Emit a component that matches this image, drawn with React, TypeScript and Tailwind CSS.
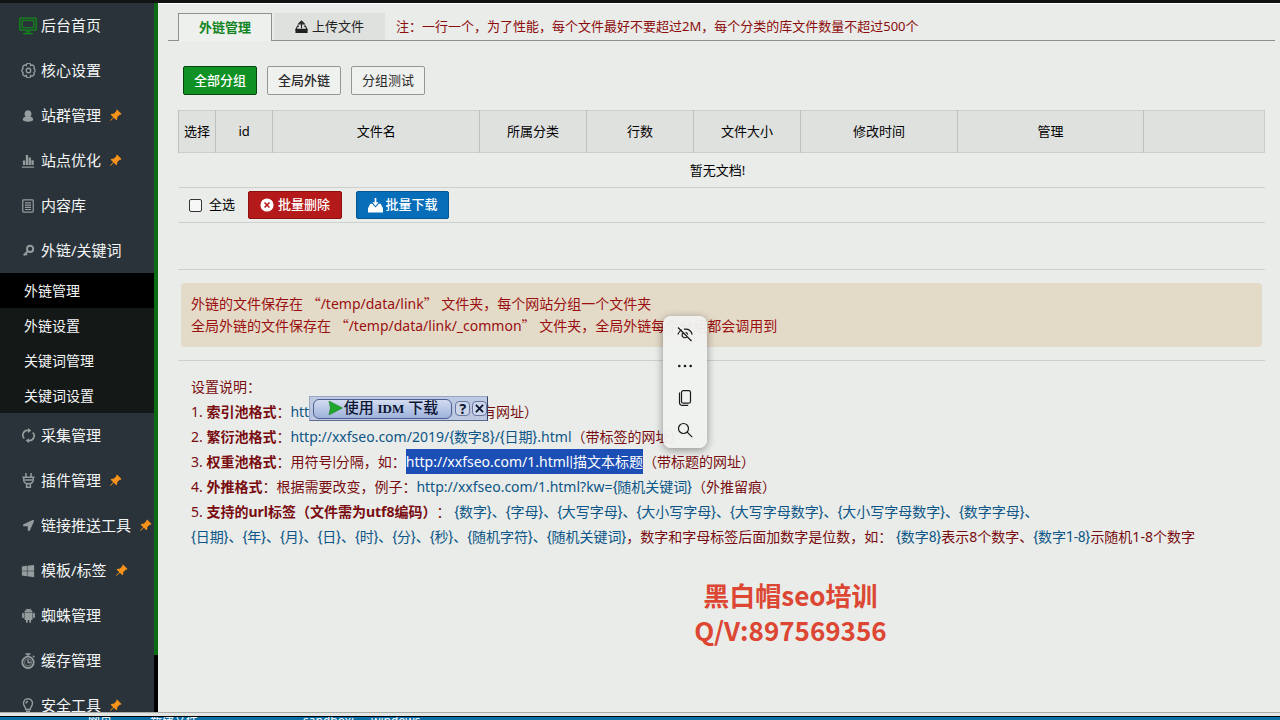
import { useState } from "react";
import type { ReactNode } from "react";
import { AiFillAndroid } from "react-icons/ai";
import { BsPinAngleFill } from "react-icons/bs";
import { FaLocationArrow, FaWindows } from "react-icons/fa";

type MenuItem = {
  label: string;
  icon: ReactNode;
  pinned?: boolean;
  children?: string[];
};

function Glyph({ children, size = 14 }: { children: ReactNode; size?: number }) {
  return (
    <svg
      width={size}
      height={size}
      viewBox="0 0 16 16"
      fill="none"
      stroke="currentColor"
      strokeWidth="1.4"
      aria-hidden="true"
    >
      {children}
    </svg>
  );
}

const MENU: MenuItem[] = [
  {
    label: "后台首页",
    icon: (
      <span className="text-[#118a1b]">
        <Glyph size={18}>
          <rect x="0.7" y="1" width="14.6" height="10.6" rx="0.6" strokeWidth="1.2" />
          <rect x="2.8" y="3" width="10.4" height="6.6" strokeWidth="1" />
          <path d="M6 13.2h4M3.6 14.8h8.8" strokeWidth="1.2" />
        </Glyph>
      </span>
    ),
  },
  {
    label: "核心设置",
    icon: (
      <Glyph size={15}>
        <path d="M5.6 2.6a2.4 2.4 0 0 1 4.8 0 2.4 2.4 0 0 1 3.4 3.2 2.6 2.6 0 0 1 0 4.4 2.4 2.4 0 0 1-3.4 3.2 2.4 2.4 0 0 1-4.8 0 2.4 2.4 0 0 1-3.4-3.2 2.6 2.6 0 0 1 0-4.4A2.4 2.4 0 0 1 5.6 2.6z" />
        <circle cx="8" cy="8" r="2.4" />
      </Glyph>
    ),
  },
  {
    label: "站群管理",
    icon: (
      <Glyph>
        <path
          d="M8 1.5a4 4 0 0 1 2.6 7c2 .6 3.4 1.8 3.4 3.6 0 1.6-2.6 2.4-6 2.4s-6-.8-6-2.4c0-1.8 1.4-3 3.4-3.6A4 4 0 0 1 8 1.5z"
          fill="currentColor"
          stroke="none"
        />
      </Glyph>
    ),
    pinned: true,
  },
  {
    label: "站点优化",
    icon: (
      <Glyph>
        <path d="M1 15h14" />
        <path d="M3.5 12.5v-5M6.8 12.5V1M10 12.5V4M13.2 12.5V7" strokeWidth="2.6" />
      </Glyph>
    ),
    pinned: true,
  },
  {
    label: "内容库",
    icon: (
      <Glyph>
        <rect x="2" y="1" width="12" height="14" rx="1" />
        <path d="M4.5 4.5h7M4.5 7h7M4.5 9.5h7M4.5 12h7" strokeWidth="1.3" />
      </Glyph>
    ),
  },
  {
    label: "外链/关键词",
    icon: (
      <Glyph size={13}>
        <circle cx="10" cy="6" r="3.8" strokeWidth="2.4" />
        <path d="M7.3 8.7 2 14M3.8 11.5l2.2 2.2" strokeWidth="2.4" />
      </Glyph>
    ),
    children: ["外链管理", "外链设置", "关键词管理", "关键词设置"],
  },
  {
    label: "采集管理",
    icon: (
      <Glyph size={15}>
        <path d="M9 2.6H7a5 5 0 0 0-3.5 8.6M7 13.4h2a5 5 0 0 0 3.5-8.6" strokeWidth="1.8" />
        <path d="M7.5 0v5.2L11 2.6zM8.5 10.8V16L5 13.4z" fill="currentColor" stroke="none" />
      </Glyph>
    ),
  },
  {
    label: "插件管理",
    icon: (
      <Glyph size={15}>
        <path
          d="M5.3 0v4M10.7 0v4M1.5 4.5h13M3 4.5V8a5 3.5 0 0 0 10 0V4.5M4 7.5h8M6 11.5v3.8h4v-3.8"
          strokeWidth="1.6"
        />
      </Glyph>
    ),
    pinned: true,
  },
  { label: "链接推送工具", icon: <FaLocationArrow size={11} />, pinned: true },
  { label: "模板/标签", icon: <FaWindows size={14} />, pinned: true },
  { label: "蜘蛛管理", icon: <AiFillAndroid size={17} /> },
  {
    label: "缓存管理",
    icon: (
      <Glyph size={16}>
        <circle cx="8" cy="9.3" r="5.7" strokeWidth="1.8" />
        <path d="M8 6.5v3h2.8M8 3.5V1M5.5 1h5M13 2.8l1.4 1.4" />
        <circle cx="8" cy="9.3" r="3.6" strokeWidth="0.7" />
      </Glyph>
    ),
  },
  {
    label: "安全工具",
    icon: (
      <Glyph size={16}>
        <path d="M5.8 11.5C5.8 9 3.5 8.2 3.5 5.3a4.5 4.5 0 0 1 9 0c0 2.9-2.3 3.7-2.3 6.2zM6 13.4h4M6.5 15.2h3M6 5.5a2 2 0 0 1 2-2" />
      </Glyph>
    ),
    pinned: true,
  },
];

const COLUMNS = [
  { label: "选择", width: "w-[3.4%]" },
  { label: "id", width: "w-[5.3%]" },
  { label: "文件名", width: "w-[19%]" },
  { label: "所属分类", width: "w-[9.9%]" },
  { label: "行数", width: "w-[9.8%]" },
  { label: "文件大小", width: "w-[9.9%]" },
  { label: "修改时间", width: "w-[14.4%]" },
  { label: "管理", width: "w-[17.2%]" },
  { label: "", width: "w-[11.1%]" },
];

const GROUPS = ["全部分组", "全局外链", "分组测试"];

export default function App() {
  return (
    <div className="flex h-screen flex-col overflow-hidden bg-[#e9ece9] font-['Noto_Sans','Noto_Sans_CJK_SC',sans-serif] text-[13px] text-black [text-spacing-trim:space-all]">
      <div className="h-[3px] shrink-0 bg-[#111413]" />
      <div className="flex min-h-0 flex-1">
        <Sidebar />
        <main className="min-w-0 flex-1 overflow-hidden border-t border-white pr-[5px] pl-2.5">
          <Tabs />
          <div className="px-2.5">
            <GroupFilter />
            <FileTable />
            <div className="h-[47px] border-b border-[#cdd0cd]" />
            <Notice />
            <Help />
          </div>
          <Contact />
        </main>
      </div>
      <DesktopEdge />
    </div>
  );
}

function Sidebar() {
  const [active, setActive] = useState("外链管理");

  return (
    <aside className="flex w-[158px] shrink-0 overflow-hidden bg-black">
      <nav className="h-full min-w-0 flex-1 overflow-hidden bg-[#2a3339] text-[#f3f5f6]">
        {MENU.map((item) => (
          <div key={item.label}>
            <a href="#" className="flex h-[45px] items-center whitespace-nowrap pl-[18px] text-[15px]">
              <span className="mr-[3px] flex w-5 shrink-0 justify-center text-[#969d9f]">{item.icon}</span>
              {item.label}
              {item.pinned && <BsPinAngleFill size={13} className="ml-2 shrink-0 text-[#f7931a]" />}
            </a>
            {item.children && (
              <div className="bg-[#141817]">
                {item.children.map((child) => (
                  <button
                    key={child}
                    onClick={() => setActive(child)}
                    className={`block h-[35px] w-full cursor-pointer pl-6 text-left text-sm ${
                      active === child ? "bg-black" : ""
                    }`}
                  >
                    {child}
                  </button>
                ))}
              </div>
            )}
          </div>
        ))}
      </nav>
      <div className="h-[92%] w-1 bg-[#0a6b12]" />
    </aside>
  );
}

function UploadIcon() {
  return (
    <svg width="13" height="13" viewBox="0 0 16 16" fill="none" stroke="currentColor" strokeWidth="1.4" aria-hidden="true">
      <path d="M5 7.5H3.2L1.2 11.5h13.6l-2-4H11M8 10V2M4.5 4.8 8 1.2l3.5 3.6z" />
      <path d="M.5 11.5h15V16H.5z" fill="currentColor" stroke="none" />
    </svg>
  );
}

function DownloadIcon() {
  return (
    <svg width="15" height="15" viewBox="0 0 16 16" fill="currentColor" aria-hidden="true">
      <path d="M2.5 6h2L8 10l3.5-4h2L16 11v4.5H0V11z" />
      <path d="M7.1 0h1.8v4.5h2.4L8 8.4 4.7 4.5h2.4z" />
    </svg>
  );
}

function Tabs() {
  return (
    <div className="flex h-[37px] items-end pt-[9px]">
      <div className="w-2.5 self-stretch border-b border-[#8d918e]" />
      <button className="h-full w-[94px] cursor-pointer border border-b-0 border-[#8d918e] bg-[#edf0ed] font-bold text-[#128423]">
        外链管理
      </button>
      <div className="flex h-full min-w-0 flex-1 items-center border-b border-[#8d918e] pl-0.5">
        <button className="flex h-full w-[111px] cursor-pointer items-center justify-center gap-1 bg-[#dfe1df] text-[#222]">
          <UploadIcon />
          上传文件
        </button>
        <p className="truncate pl-[11px] text-[#8c0b0b]">
          注：一行一个，为了性能，每个文件最好不要超过2M，每个分类的库文件数量不超过500个
        </p>
      </div>
    </div>
  );
}

function GroupFilter() {
  const [group, setGroup] = useState("全部分组");

  return (
    <div className="flex gap-2.5 pt-[25px] pb-[15px] pl-[5px]">
      {GROUPS.map((g) => (
        <button
          key={g}
          onClick={() => setGroup(g)}
          className={`h-[29px] w-[74px] cursor-pointer rounded-xs border ${
            group === g
              ? "border-[#06450d] bg-[#0f9124] font-medium text-white"
              : "border-[#949895] bg-[#eff1ef] text-[#2b2b2b]"
          } ${g === "全局外链" ? "font-medium" : ""}`}
        >
          {g}
        </button>
      ))}
    </div>
  );
}

function FileTable() {
  return (
    <>
      <table className="w-full table-fixed border-collapse">
        <thead>
          <tr className="h-[42px] border border-[#cbcecb] bg-[#dfe1df]">
            {COLUMNS.map((c) => (
              <th key={c.label} className={`border-x border-[#bcbfbc] p-0 font-normal last:border-r-[#cbcecb] ${c.width}`}>
                {c.label}
              </th>
            ))}
          </tr>
        </thead>
        <tbody>
          <tr className="h-[35px] border-b border-[#cdd0cd]">
            <td colSpan={9} className="pt-0.5 pr-2 text-center">
              暂无文档!
            </td>
          </tr>
        </tbody>
      </table>
      <div className="flex h-[35px] items-center border-b border-[#cdd0cd] pl-[11px]">
        <label className="mr-[13px] flex items-center gap-[7px]">
          <input
            type="checkbox"
            className="size-[13px] appearance-none rounded-xs border border-[#333] bg-white/60 checked:bg-[#0f9124]"
          />
          全选
        </label>
        <button className="mr-3.5 flex h-7 w-[94px] cursor-pointer items-center justify-center gap-1 rounded-xs border border-[#8c1010] bg-[#b51a1a] font-medium text-white">
          <svg width="14" height="14" viewBox="0 0 16 16" aria-hidden="true">
            <circle cx="8" cy="8" r="7.5" fill="white" />
            <path d="m5.2 5.2 5.6 5.6m0-5.6-5.6 5.6" stroke="#b51a1a" strokeWidth="1.8" />
          </svg>
          批量删除
        </button>
        <button className="flex h-7 w-[93px] cursor-pointer items-center justify-center gap-[3px] rounded-xs border border-[#07568f] bg-[#066db8] font-medium text-white">
          <DownloadIcon />
          批量下载
        </button>
      </div>
    </>
  );
}

// Curly quotes are taken from the CJK face so that they stay full width
function Path({ children }: { children: string }) {
  return (
    <>
      <span className="font-['Noto_Sans_CJK_SC',sans-serif] leading-none">“</span>
      {children}
      <span className="font-['Noto_Sans_CJK_SC',sans-serif] leading-none">”</span>
    </>
  );
}

function Notice() {
  return (
    <div className="border-b border-[#cdd0cd] px-[3px] py-[13px]">
      <div className="rounded bg-[#e4dac8] p-2.5 text-sm leading-[22px] text-[#9a1010]">
        <p>
          外链的文件保存在 <Path>/temp/data/link</Path> 文件夹，每个网站分组一个文件夹
        </p>
        <p>
          全局外链的文件保存在 <Path>/temp/data/link/_common</Path> 文件夹，全局外链每个分组都会调用到
        </p>
      </div>
    </div>
  );
}

function Url({ children }: { children: ReactNode }) {
  return (
    <a href="#" className="text-[#0d5687]">
      {children}
    </a>
  );
}

// Roboto has narrower braces and bars than the body face
function Narrow({ children }: { children: ReactNode }) {
  return <span className="font-[Roboto,'Noto_Sans_CJK_SC',sans-serif] leading-none">{children}</span>;
}

function Tag({ children }: { children: ReactNode }) {
  return (
    <span className="text-[#0d5687]">
      <Narrow>{children}</Narrow>
    </span>
  );
}

function Help() {
  return (
    <section className="relative px-[13px] pt-[13px] text-sm leading-[25px] text-[#790c10]">
      <p>设置说明：</p>
      <p>
        1. <b>索引池格式</b>：
        <span className="relative">
          <Url>http://xxfseo.com/1.html</Url>
          <IdmBar />
        </span>
        （所有网址）
      </p>
      <p>
        2. <b>繁衍池格式</b>：
        <Url>
          http://xxfseo.com/2019/<Narrow>{"{"}</Narrow>数字8<Narrow>{"}"}</Narrow>/<Narrow>{"{日期}"}</Narrow>.html
        </Url>
        （带标签的网址）
      </p>
      <p>
        3. <b>权重池格式</b>：用符号<Narrow>|</Narrow>分隔，如：
        <span className="inline-block bg-[#1c4fb5] text-white">
          http://xxfseo.com/1.html<Narrow>|</Narrow>描文本标题
        </span>
        （带标题的网址）
      </p>
      <p>
        4. <b>外推格式</b>：根据需要改变，例子：
        <Url>
          http://xxfseo.com/1.html?kw=<Narrow>{"{随机关键词}"}</Narrow>
        </Url>
        （外推留痕）
      </p>
      <p>
        5. <b>支持的url标签（文件需为utf8编码）</b>：{" "}
        <Tag>{"{数字}、{字母}、{大写字母}、{大小写字母}、{大写字母数字}、{大小写字母数字}、{数字字母}、"}</Tag>
      </p>
      <p>
        <Tag>{"{日期}、{年}、{月}、{日}、{时}、{分}、{秒}、{随机字符}、{随机关键词}"}</Tag>
        ，数字和字母标签后面加数字是位数，如： <Tag>{"{数字8}"}</Tag>表示8个数字、
        <Tag>{"{数字1-8}"}</Tag>示随机1-8个数字
      </p>
      <SelectionMenu />
    </section>
  );
}

function IdmBar() {
  return (
    <span className="absolute -top-1.5 left-[19px] flex h-[25px] w-[179px] items-center gap-[3px] border border-[#9aa5c4] border-r-[#333f66] border-b-[#5d6a8e] bg-[#bcc7e2]/95 pl-[3px] text-[#0c1633]">
      <button className="flex h-5 w-[139px] cursor-pointer items-center justify-center gap-px rounded-md border border-[#4c5f92] bg-linear-to-b from-[#d3dcf0] to-[#9fb2db] pb-0.5 text-[15px] leading-none font-medium whitespace-nowrap">
        <svg width="15" height="14" viewBox="0 0 16 15" aria-hidden="true">
          <path d="m1 0 14.5 7.5L1 15l1.5-7.5z" fill="#20a82d" stroke="#158022" strokeWidth=".6" />
        </svg>
        <span>
          使用 <span className="font-['Liberation_Serif',serif] text-[13px] font-bold">IDM</span> 下载
        </span>
      </button>
      <button
        aria-label="帮助"
        className="flex size-[15px] cursor-pointer items-center justify-center rounded border border-[#68779f] bg-[#ccd5ea] text-sm leading-none font-bold"
      >
        ?
      </button>
      <button
        aria-label="关闭"
        className="-ml-px flex size-[15px] cursor-pointer items-center justify-center rounded border border-[#68779f] bg-[#ccd5ea]"
      >
        <svg width="9" height="9" viewBox="0 0 10 10" stroke="#0c1633" strokeWidth="2" aria-hidden="true">
          <path d="m1 1 8 8m0-8-8 8" />
        </svg>
      </button>
    </span>
  );
}

const SELECTION_ACTIONS = [
  {
    label: "隐藏",
    icon: (
      <path d="M1 1.5 14.5 15M.8 8.5C1.6 6 3 4.7 4.8 3.8M7 3.2c4-.6 7.2 1.6 8.2 5.3M6.3 6.8a2.7 2.7 0 1 0 3.7 3.8M8.5 6.3a2.7 2.7 0 0 1 2.2 2.3" />
    ),
  },
  {
    label: "更多",
    icon: (
      <g fill="currentColor" stroke="none">
        <circle cx="2.3" cy="8" r="1.3" />
        <circle cx="8" cy="8" r="1.3" />
        <circle cx="13.7" cy="8" r="1.3" />
      </g>
    ),
  },
  {
    label: "复制",
    icon: (
      <>
        <rect x="4.5" y=".6" width="9" height="12.6" rx="1.8" />
        <path d="M2.5 2.6v10a2.7 2.7 0 0 0 2.7 2.8h6" />
      </>
    ),
  },
  {
    label: "搜索",
    icon: (
      <>
        <circle cx="6.5" cy="6.5" r="5" />
        <path d="m10.2 10.2 5 5" />
      </>
    ),
  },
];

function SelectionMenu() {
  return (
    <div className="absolute -top-[45px] left-[485px] flex w-11 flex-col rounded-lg bg-[#f0f2f0]/95 py-0.5 text-[#1a1a1a] shadow-[0_2px_8px_rgba(0,0,0,0.4)]">
      {SELECTION_ACTIONS.map((a) => (
        <button key={a.label} aria-label={a.label} className="flex h-8 cursor-pointer items-center justify-center">
          <svg width="16" height="16" viewBox="0 0 16 16" fill="none" stroke="currentColor" strokeWidth="1.2" aria-hidden="true">
            {a.icon}
          </svg>
        </button>
      ))}
    </div>
  );
}

function Contact() {
  return (
    <div className="mt-7 pl-[138px] text-center font-['Noto_Sans_CJK_SC',sans-serif] text-[26px] leading-[35px] font-bold text-[#dc4632]">
      <p>黑白帽seo培训</p>
      <p>Q/V:897569356</p>
    </div>
  );
}

// Sliver of the desktop that shows under the browser window
function DesktopEdge() {
  return (
    <div className="shrink-0">
      <div className="h-1 border-t border-[#a9adaa] bg-[#e3e6e3]" />
      <div className="flex h-1 overflow-hidden border-t border-black bg-[#0b6ea6] pl-[88px] text-xs leading-[8px] text-white">
        <span className="w-[62px] shrink-0">网页</span>
        <span className="w-[153px] shrink-0">新建文件</span>
        <span className="w-[68px] shrink-0">sandboxi</span>
        <span>windows</span>
      </div>
    </div>
  );
}
